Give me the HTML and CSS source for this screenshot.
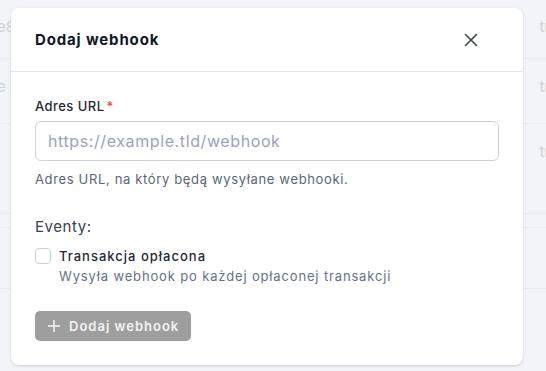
FILE: index.html
```html
<!DOCTYPE html>
<html lang="pl">
<head>
<meta charset="utf-8">
<title>Dodaj webhook</title>
<link rel="stylesheet" href="styles.css">
</head>
<body>
<div class="backdrop">
  <div class="bg-row r1"><span class="bg-l">e8</span><span class="bg-r">tr</span></div>
  <div class="bg-row r2"><span class="bg-l">e</span><span class="bg-r">tr</span></div>
  <div class="bg-row r3"><span class="bg-l"></span><span class="bg-r">tr</span></div>
  <div class="bg-row r4"></div>
  <div class="bg-row r5"></div>
</div>
<div class="modal">
  <div class="modal-header">
    <h2 class="modal-title">Dodaj webhook</h2>
    <button class="close" aria-label="Zamknij">
      <svg width="14" height="14" viewBox="0 0 14 14"><path d="M1.5 1.5 L12.5 12.5 M12.5 1.5 L1.5 12.5" stroke="#3b4454" stroke-width="1.6" stroke-linecap="round" fill="none"/></svg>
    </button>
  </div>
  <div class="modal-body">
    <label class="label">Adres URL<span class="req">*</span></label>
    <input class="input" type="text" placeholder="https://example.tld/webhook">
    <p class="help">Adres URL, na który będą wysyłane webhooki.</p>
    <p class="events">Eventy:</p>
    <div class="check-row">
      <span class="checkbox"></span>
      <div class="check-text">
        <div class="check-title">Transakcja opłacona</div>
        <div class="check-desc">Wysyła webhook po każdej opłaconej transakcji</div>
      </div>
    </div>
    <button class="btn">
      <svg width="14" height="14" viewBox="0 0 14 14"><path d="M7 1 V13 M1 7 H13" stroke="#f3f3f3" stroke-width="1.5" fill="none"/></svg>
      Dodaj webhook
    </button>
  </div>
</div>
</body>
</html>
```
FILE: styles.css
```css
html, body {
  margin: 0;
  padding: 0;
}
body {
  background: #f2f4f7;
  font-family: "Inter", "Noto Sans", sans-serif;
  width: 546px;
  height: 371px;
  overflow: hidden;
  position: relative;
}
.backdrop {
  position: absolute;
  inset: 0;
  z-index: 0;
  overflow: hidden;
}
.bg-row {
  display: flex;
  justify-content: space-between;
  border-bottom: 1px solid #e8ebef;
  color: #cdd2da;
  font-size: 15px;
  line-height: 20px;
  box-sizing: border-box;
}
.r1 { height: 59px; padding-top: 17px; }
.r2 { height: 65px; padding-top: 18px; }
.r3 { height: 90px; padding-top: 18px; }
.r4 { height: 14px; }
.r5 { height: 61px; }
.bg-l { margin-left: -3px; }
.bg-r { margin-right: -4px; }

.modal {
  position: relative;
  z-index: 1;
  margin: 8px 0 0 11px;
  width: 512px;
  background: #fff;
  border-radius: 8px;
  box-shadow: 0 1px 3px rgba(30, 40, 60, 0.12), 0 1px 2px rgba(30, 40, 60, 0.06);
}
.modal-header {
  display: flex;
  align-items: center;
  justify-content: space-between;
  height: 63px;
  padding: 0 24px;
  border-bottom: 1px solid #e3e6ec;
}
.modal-title {
  margin: 0;
  font-size: 15px;
  font-weight: 700;
  color: #111827;
  letter-spacing: 0.85px;
}
.close {
  border: 0;
  background: none;
  padding: 0;
  margin-right: 21px;
  width: 14px;
  height: 14px;
  display: flex;
}
.modal-body {
  padding: 24px 24px 24px;
  display: flex;
  flex-direction: column;
  align-items: flex-start;
}
.label {
  font-size: 13px;
  font-weight: 500;
  line-height: 20px;
  color: #1f2937;
  letter-spacing: 0.45px;
}
.req {
  color: #ef4444;
  margin-left: 2px;
}
.input {
  margin-top: 5px;
  width: 464px;
  height: 40px;
  box-sizing: border-box;
  border: 1px solid #cdd3de;
  border-radius: 6px;
  padding: 0 12px;
  font-family: inherit;
  font-size: 16px;
  letter-spacing: 0.6px;
  color: #1f2937;
  outline: none;
}
.input::placeholder {
  color: #9aa3b6;
}
.help {
  margin: 8px 0 0;
  font-size: 13px;
  line-height: 20px;
  color: #5b6579;
  letter-spacing: 0.65px;
}
.events {
  margin: 26px 0 0;
  font-size: 15px;
  line-height: 24px;
  color: #374151;
  letter-spacing: 0.55px;
}
.check-row {
  margin-top: 7px;
  display: flex;
  gap: 8px;
}
.checkbox {
  margin-top: 2px;
  width: 16px;
  height: 16px;
  box-sizing: border-box;
  border: 1px solid #c9d0dc;
  border-radius: 4px;
  background: #fff;
}
.check-title {
  font-size: 13px;
  font-weight: 500;
  line-height: 20px;
  color: #1f2937;
  letter-spacing: 1px;
}
.check-desc {
  font-size: 13px;
  line-height: 20px;
  color: #667089;
  letter-spacing: 0.85px;
}
.btn {
  margin-top: 25px;
  height: 30px;
  display: flex;
  align-items: center;
  gap: 8px;
  padding: 0 12px;
  border: 0;
  border-radius: 5px;
  background: #9e9e9e;
  color: #f3f3f3;
  font-family: inherit;
  font-size: 13px;
  font-weight: 600;
  letter-spacing: 1px;
}
```
